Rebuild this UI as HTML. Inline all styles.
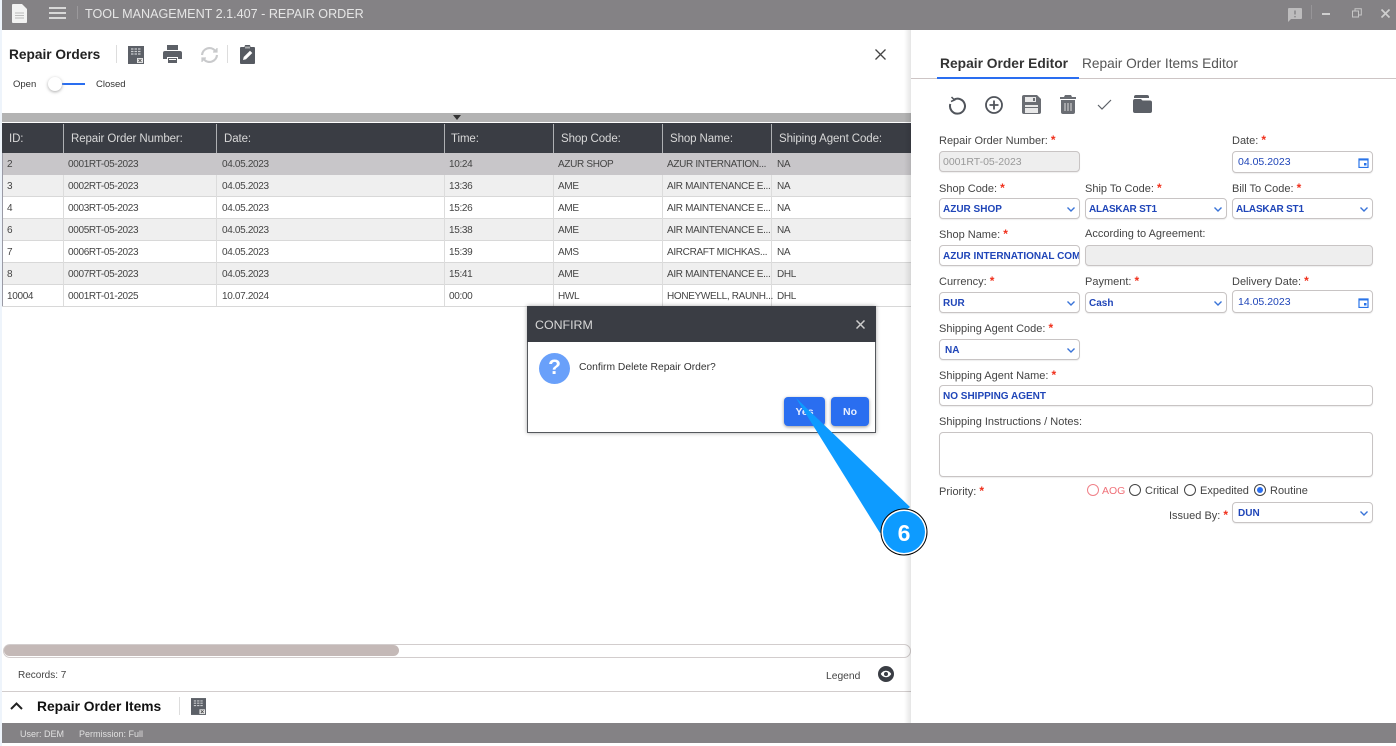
<!DOCTYPE html>
<html><head><meta charset="utf-8"><title>Tool Management - Repair Order</title>
<style>
html,body{margin:0;padding:0;width:1396px;height:746px;overflow:hidden;background:#fff;font-family:"Liberation Sans",sans-serif;color:#333}
div,span,svg{position:absolute;box-sizing:border-box}
.t{white-space:nowrap;line-height:16px}
.c{font-size:10px;letter-spacing:-.33px;color:#444;margin-top:-7px}
.h{font-size:11.5px;letter-spacing:-.1px;color:#d8d8d8;top:131px}
.r{left:2px;width:909px;height:22px;border-bottom:1px solid #d8d8d8}
.v{width:1px;background:#dcdcdc;top:153px;height:153px}
.hv{width:1px;background:#aeb0b3;top:124px;height:29px}
.l{font-size:11px;color:#444;margin-top:-8px}
.l b{color:#f0301c;font-weight:bold;font-size:12px;position:static}
.i{height:21px;border:1px solid #c8c4c4;border-radius:4px;background:#fff;font-size:10px;font-weight:bold;color:#1f45b8;line-height:20px;padding:1px 0 0 3px;white-space:nowrap;overflow:hidden;box-shadow:0 1px 1px #eee}
.d{background:#eee;color:#999;font-weight:normal;font-size:10.5px;padding-top:0}
.n{font-weight:normal;padding-left:5px}
.chev{right:3px;top:7px;width:10px;height:7px}
.cal{right:3px;top:5px;width:11px;height:11px}
</style></head><body>
<div style="left:0;top:0;width:2px;height:746px;background:#eef4fb"></div>
<!-- top bar -->
<div style="left:2px;top:0;width:1394px;height:30px;background:#848285"></div>
<svg style="left:12px;top:4px" width="16" height="19" viewBox="0 0 16 19"><path d="M1 0h9l5 5v13a1 1 0 0 1-1 1H1a1 1 0 0 1-1-1V1a1 1 0 0 1 1-1z" fill="#f2f2f2"/><path d="M3 9h9M3 11.5h9M3 14h9" stroke="#bbb" stroke-width="1"/></svg>
<svg style="left:49px;top:7px" width="17" height="12" viewBox="0 0 17 12"><path d="M0 1h17M0 6h17M0 11h17" stroke="#f4f4f4" stroke-width="1.6"/></svg>
<div style="left:77px;top:6px;width:1px;height:13px;background:#9b999c"></div>
<div class="t" style="left:85px;top:6px;font-size:12.6px;color:#e6e6e6">TOOL MANAGEMENT 2.1.407 - REPAIR ORDER</div>
<svg style="left:1288px;top:8px" width="14" height="14" viewBox="0 0 14 14"><path d="M1 0h12a1 1 0 0 1 1 1v9a1 1 0 0 1-1 1H3l-3 3V1a1 1 0 0 1 1-1z" fill="#bdbcbd"/><path d="M7 2.5v4M7 8v1.4" stroke="#848285" stroke-width="1.4"/></svg>
<div style="left:1311px;top:5px;width:1px;height:14px;background:#979598"></div>
<div style="left:1322px;top:13px;width:8px;height:2px;background:#cfcfcf"></div>
<svg style="left:1352px;top:8px" width="10" height="10" viewBox="0 0 10 10" fill="none" stroke="#c6c6c6"><rect x=".5" y="3" width="6" height="6"/><path d="M3 3V.7h6.3V7H6.5"/></svg>
<svg style="left:1381px;top:9px" width="9" height="9" viewBox="0 0 9 9"><path d="M.5.5l8 8M8.500.5l-8 8" stroke="#cfcfcf" stroke-width="1.7"/></svg>

<!-- left panel header -->
<div class="t" style="left:9px;top:47px;font-size:13.7px;font-weight:bold;color:#222">Repair Orders</div>
<div style="left:116px;top:45px;width:1px;height:18px;background:#ddd"></div>
<svg style="left:128px;top:46px" width="16" height="18" viewBox="0 0 16 18"><rect width="16" height="18" fill="#5c6067"/><path d="M3 3h10M3 5.500h10M3 8h10" stroke="#c9cbce" stroke-width="1.200" stroke-dasharray="2.500 1"/><rect x="9" y="12" width="6" height="5" fill="#e5e5e5"/><path d="M10.500 13l3 3M13.500 13l-3 3" stroke="#444" stroke-width=".8"/></svg>
<svg style="left:163px;top:45px" width="19" height="18" viewBox="0 0 19 18"><path d="M4 0h11v5H4z" fill="#5c6067"/><path d="M2 6h15a2 2 0 0 1 2 2v6h-4v-2H4v2H0V8a2 2 0 0 1 2-2z" fill="#5c6067"/><path d="M5 13h9v5H5z" fill="#5c6067"/><path d="M6 14h7v1H6z" fill="#fff"/></svg>
<svg style="left:200px;top:46px" width="19" height="18" viewBox="0 0 19 18" fill="none" stroke="#c9cacc" stroke-width="2.200"><path d="M2 9a7.500 7.500 0 0 1 13-4.500"/><path d="M17 9a7.500 7.500 0 0 1-13 4.500"/><path d="M13 6h4V2M6 12H2v4" stroke-width="1.200" fill="#c9cacc"/></svg>
<div style="left:227px;top:45px;width:1px;height:18px;background:#ddd"></div>
<svg style="left:240px;top:45px" width="15" height="19" viewBox="0 0 15 19"><path d="M1 2h3.500a3 3 0 0 1 6 0H14a1 1 0 0 1 1 1v15a1 1 0 0 1-1 1H1a1 1 0 0 1-1-1V3a1 1 0 0 1 1-1z" fill="#565a61"/><path d="M3 15l.7-3 6.300-6.300 2.300 2.300-6.300 6.300z" fill="#fff"/><rect x="5" y="1.500" width="5" height="2" fill="#fff" opacity=".5"/></svg>
<svg style="left:875px;top:49px" width="11" height="11" viewBox="0 0 11 11"><path d="M.5.5l10 10M10.500.5l-10 10" stroke="#444" stroke-width="1.300"/></svg>
<div class="t" style="left:13px;top:77px;font-size:9.5px;color:#333">Open</div>
<div style="left:55px;top:83px;width:30px;height:2px;background:#2a6ef0"></div>
<div style="left:48px;top:77px;width:14px;height:14px;border-radius:50%;background:#fff;box-shadow:0 1px 3px #aaa"></div>
<div class="t" style="left:96px;top:77px;font-size:9.5px;color:#333">Closed</div>

<!-- table -->
<div style="left:2px;top:113px;width:909px;height:9px;background:#b3b3b3"></div>
<svg style="left:453px;top:115px" width="8" height="5"><path d="M0 0h8L4 5z" fill="#333"/></svg>
<div style="left:2px;top:123px;width:909px;height:30px;background:#3a3d44"></div>
<div class="hv" style="left:63px"></div><div class="hv" style="left:216px"></div><div class="hv" style="left:444px"></div><div class="hv" style="left:553px"></div><div class="hv" style="left:662px"></div><div class="hv" style="left:771px"></div>
<div class="t h" style="left:9px">ID:</div>
<div class="t h" style="left:71px">Repair Order Number:</div>
<div class="t h" style="left:224px">Date:</div>
<div class="t h" style="left:451px">Time:</div>
<div class="t h" style="left:561px">Shop Code:</div>
<div class="t h" style="left:670px">Shop Name:</div>
<div class="t h" style="left:779px">Shiping Agent Code:</div>

<div class="r" style="top:153px;background:#c8c6c9;border-bottom:0"></div>
<div class="r" style="top:175px;background:#efefef"></div>
<div class="r" style="top:197px;background:#fff"></div>
<div class="r" style="top:219px;background:#efefef"></div>
<div class="r" style="top:241px;background:#fff"></div>
<div class="r" style="top:263px;background:#efefef"></div>
<div class="r" style="top:285px;background:#fff"></div>
<div class="v" style="left:63px;top:175px;height:131px"></div><div class="v" style="left:216px;top:175px;height:131px"></div><div class="v" style="left:444px;top:175px;height:131px"></div><div class="v" style="left:553px;top:175px;height:131px"></div><div class="v" style="left:662px;top:175px;height:131px"></div><div class="v" style="left:771px;top:175px;height:131px"></div>
<div style="left:2px;top:153px;width:1px;height:153px;background:#9a9aa5"></div>

<div class="t c" style="left:7px;top:164px">2</div><div class="t c" style="left:68px;top:164px">0001RT-05-2023</div><div class="t c" style="left:222px;top:164px">04.05.2023</div><div class="t c" style="left:449px;top:164px">10:24</div><div class="t c" style="left:558px;top:164px">AZUR SHOP</div><div class="t c" style="left:667px;top:164px">AZUR INTERNATION...</div><div class="t c" style="left:777px;top:164px">NA</div>
<div class="t c" style="left:7px;top:186px">3</div><div class="t c" style="left:68px;top:186px">0002RT-05-2023</div><div class="t c" style="left:222px;top:186px">04.05.2023</div><div class="t c" style="left:449px;top:186px">13:36</div><div class="t c" style="left:558px;top:186px">AME</div><div class="t c" style="left:667px;top:186px">AIR MAINTENANCE E...</div><div class="t c" style="left:777px;top:186px">NA</div>
<div class="t c" style="left:7px;top:208px">4</div><div class="t c" style="left:68px;top:208px">0003RT-05-2023</div><div class="t c" style="left:222px;top:208px">04.05.2023</div><div class="t c" style="left:449px;top:208px">15:26</div><div class="t c" style="left:558px;top:208px">AME</div><div class="t c" style="left:667px;top:208px">AIR MAINTENANCE E...</div><div class="t c" style="left:777px;top:208px">NA</div>
<div class="t c" style="left:7px;top:230px">6</div><div class="t c" style="left:68px;top:230px">0005RT-05-2023</div><div class="t c" style="left:222px;top:230px">04.05.2023</div><div class="t c" style="left:449px;top:230px">15:38</div><div class="t c" style="left:558px;top:230px">AME</div><div class="t c" style="left:667px;top:230px">AIR MAINTENANCE E...</div><div class="t c" style="left:777px;top:230px">NA</div>
<div class="t c" style="left:7px;top:252px">7</div><div class="t c" style="left:68px;top:252px">0006RT-05-2023</div><div class="t c" style="left:222px;top:252px">04.05.2023</div><div class="t c" style="left:449px;top:252px">15:39</div><div class="t c" style="left:558px;top:252px">AMS</div><div class="t c" style="left:667px;top:252px">AIRCRAFT MICHKAS...</div><div class="t c" style="left:777px;top:252px">NA</div>
<div class="t c" style="left:7px;top:274px">8</div><div class="t c" style="left:68px;top:274px">0007RT-05-2023</div><div class="t c" style="left:222px;top:274px">04.05.2023</div><div class="t c" style="left:449px;top:274px">15:41</div><div class="t c" style="left:558px;top:274px">AME</div><div class="t c" style="left:667px;top:274px">AIR MAINTENANCE E...</div><div class="t c" style="left:777px;top:274px">DHL</div>
<div class="t c" style="left:7px;top:296px">10004</div><div class="t c" style="left:68px;top:296px">0001RT-01-2025</div><div class="t c" style="left:222px;top:296px">10.07.2024</div><div class="t c" style="left:449px;top:296px">00:00</div><div class="t c" style="left:558px;top:296px">HWL</div><div class="t c" style="left:667px;top:296px">HONEYWELL, RAUNH...</div><div class="t c" style="left:777px;top:296px">DHL</div>

<!-- scrollbar & footer -->
<div style="left:3px;top:644px;width:908px;height:14px;border:1px solid #d2cdcd;border-radius:7px;background:#fff"></div>
<div style="left:4px;top:645px;width:395px;height:11px;border-radius:6px;background:#c4b9b7"></div>
<div class="t" style="left:18px;top:668px;font-size:10px;color:#444">Records: 7</div>
<div class="t" style="left:826px;top:669px;font-size:10.3px;color:#444">Legend</div>
<svg style="left:878px;top:666px" width="16" height="16" viewBox="0 0 16 16"><circle cx="8" cy="8" r="8" fill="#3a3d44"/><path d="M2.800 8C4 5.800 6 4.800 8 4.800S12 5.800 13.200 8C12 10.200 10 11.200 8 11.200S4 10.200 2.800 8z" fill="#fff"/><circle cx="8" cy="8" r="2" fill="#3a3d44"/></svg>
<div style="left:2px;top:691px;width:909px;height:1px;background:#d2cdcd"></div>
<svg style="left:10px;top:702px" width="13" height="8" viewBox="0 0 13 8"><path d="M1 7l5.500-5.500L12 7" fill="none" stroke="#222" stroke-width="2"/></svg>
<div class="t" style="left:37px;top:699px;font-size:13.8px;font-weight:bold;color:#111">Repair Order Items</div>
<div style="left:179px;top:697px;width:1px;height:18px;background:#ddd"></div>
<svg style="left:191px;top:698px" width="15" height="17" viewBox="0 0 16 18"><rect width="16" height="18" fill="#5c6067"/><path d="M3 3h10M3 5.500h10M3 8h10" stroke="#c9cbce" stroke-width="1.200" stroke-dasharray="2.500 1"/><rect x="9" y="12" width="6" height="5" fill="#e5e5e5"/><path d="M10.500 13l3 3M13.500 13l-3 3" stroke="#444" stroke-width=".8"/></svg>
<div style="left:2px;top:723px;width:1394px;height:20px;background:#848285"></div>
<div class="t" style="left:20px;top:726px;font-size:9px;color:#e0e0e0">User: DEM</div>
<div class="t" style="left:79px;top:726px;font-size:9px;color:#e0e0e0">Permission: Full</div>

<!-- divider shadow -->
<div style="left:904px;top:30px;width:7px;height:693px;background:linear-gradient(to right,rgba(0,0,0,0),rgba(0,0,0,.1))"></div>

<!-- editor tabs -->
<div class="t" style="left:940px;top:56px;font-size:13.8px;font-weight:bold;color:#333">Repair Order Editor</div>
<div class="t" style="left:1082px;top:56px;font-size:13.7px;color:#555">Repair Order Items Editor</div>
<div style="left:911px;top:78px;width:485px;height:1px;background:#cdc5c5"></div>
<div style="left:937px;top:77px;width:142px;height:2px;background:#2a6ef0"></div>

<svg style="left:948px;top:96px" width="18" height="19" viewBox="0 0 18 19" fill="none" stroke="#50545b" stroke-width="2"><path d="M5.500 3.800A7.500 7.500 0 1 1 2.300 8"/><path d="M3.500 1l3 3-3.500 1.500" stroke-width="1.500"/></svg>
<svg style="left:985px;top:96px" width="18" height="18" viewBox="0 0 18 18" fill="none" stroke="#50545b" stroke-width="1.800"><circle cx="9" cy="9" r="8"/><path d="M9 4.500v9M4.500 9h9"/></svg>
<svg style="left:1022px;top:95px" width="19" height="19" viewBox="0 0 19 19"><path d="M2 0h13l4 4v13a2 2 0 0 1-2 2H2a2 2 0 0 1-2-2V2a2 2 0 0 1 2-2z" fill="#6a6d73"/><rect x="3" y="2" width="11" height="5" fill="#e8e8e8"/><rect x="11" y="3" width="2" height="3" fill="#6a6d73"/><rect x="3" y="10" width="13" height="8" fill="#e8e8e8"/><rect x="3" y="12" width="13" height="1" fill="#6a6d73"/></svg>
<svg style="left:1060px;top:95px" width="16" height="19" viewBox="0 0 16 19"><path d="M5 0h6l1 2h4v2H0V2h4z" fill="#6a6d73"/><path d="M1 5h14v12a2 2 0 0 1-2 2H3a2 2 0 0 1-2-2z" fill="#6a6d73"/><path d="M5 8v8M8 8v8M11 8v8" stroke="#ddd" stroke-width="1"/></svg>
<svg style="left:1097px;top:99px" width="15" height="11" viewBox="0 0 15 11"><path d="M1 6l4 4 9-9" fill="none" stroke="#5c6067" stroke-width="1.200"/></svg>
<svg style="left:1133px;top:95px" width="19" height="18" viewBox="0 0 19 18"><path d="M1 2a2 2 0 0 1 2-2h11a2 2 0 0 1 2 2v1H1z" fill="#5c6067"/><path d="M0 6a2 2 0 0 1 2-2h6l1.500 1.500H17a2 2 0 0 1 2 2V16a2 2 0 0 1-2 2H2a2 2 0 0 1-2-2z" fill="#5c6067"/></svg>

<!-- form -->
<div class="t l" style="left:939px;top:140px">Repair Order Number: <b>*</b></div>
<div class="i d" style="left:939px;top:151px;width:141px">0001RT-05-2023</div>
<div class="t l" style="left:1232px;top:140px">Date: <b>*</b></div>
<div class="i n" style="left:1232px;top:151px;width:141px;height:22px;line-height:20px;font-weight:normal;font-size:10.5px;padding-top:0">04.05.2023<svg class="cal" viewBox="0 0 11 11" style="top:5px"><path d="M1 2h9v8.500H1z" fill="none" stroke="#2a74e8" stroke-width="1.200"/><path d="M1 1.500h9v2H1zM6 6h2.500v2.500H6z" fill="#2a74e8"/></svg></div>

<div class="t l" style="left:939px;top:188px">Shop Code: <b>*</b></div>
<div class="i" style="left:939px;top:198px;width:141px">AZUR SHOP<svg class="chev" viewBox="0 0 10 7"><path d="M1.500 1.500L5 5l3.500-3.500" fill="none" stroke="#3a74d8" stroke-width="1.400"/></svg></div>
<div class="t l" style="left:1085px;top:188px">Ship To Code: <b>*</b></div>
<div class="i" style="left:1085px;top:198px;width:142px;letter-spacing:-.2px">ALASKAR ST1<svg class="chev" viewBox="0 0 10 7"><path d="M1.500 1.500L5 5l3.500-3.500" fill="none" stroke="#3a74d8" stroke-width="1.400"/></svg></div>
<div class="t l" style="left:1232px;top:188px">Bill To Code: <b>*</b></div>
<div class="i" style="left:1232px;top:198px;width:141px;letter-spacing:-.2px">ALASKAR ST1<svg class="chev" viewBox="0 0 10 7"><path d="M1.500 1.500L5 5l3.500-3.500" fill="none" stroke="#3a74d8" stroke-width="1.400"/></svg></div>

<div class="t l" style="left:939px;top:234px">Shop Name: <b>*</b></div>
<div class="i" style="left:939px;top:245px;width:141px">AZUR INTERNATIONAL COMPANY</div>
<div class="t l" style="left:1085px;top:234px">According to Agreement:</div>
<div class="i d" style="left:1085px;top:245px;width:288px"></div>

<div class="t l" style="left:939px;top:281px">Currency: <b>*</b></div>
<div class="i" style="left:939px;top:292px;width:141px">RUR<svg class="chev" viewBox="0 0 10 7"><path d="M1.500 1.500L5 5l3.500-3.500" fill="none" stroke="#3a74d8" stroke-width="1.400"/></svg></div>
<div class="t l" style="left:1085px;top:281px">Payment: <b>*</b></div>
<div class="i" style="left:1085px;top:292px;width:142px">Cash<svg class="chev" viewBox="0 0 10 7"><path d="M1.500 1.500L5 5l3.500-3.500" fill="none" stroke="#3a74d8" stroke-width="1.400"/></svg></div>
<div class="t l" style="left:1232px;top:281px">Delivery Date: <b>*</b></div>
<div class="i n" style="left:1232px;top:290px;width:141px;height:23px;line-height:21px;font-weight:normal;font-size:10.5px">14.05.2023<svg class="cal" viewBox="0 0 11 11" style="top:6px"><path d="M1 2h9v8.500H1z" fill="none" stroke="#2a74e8" stroke-width="1.200"/><path d="M1 1.500h9v2H1zM6 6h2.500v2.500H6z" fill="#2a74e8"/></svg></div>

<div class="t l" style="left:939px;top:328px">Shipping Agent Code: <b>*</b></div>
<div class="i n" style="left:939px;top:339px;width:141px;font-weight:bold">NA<svg class="chev" viewBox="0 0 10 7"><path d="M1.500 1.500L5 5l3.500-3.500" fill="none" stroke="#3a74d8" stroke-width="1.400"/></svg></div>
<div class="t l" style="left:939px;top:375px">Shipping Agent Name: <b>*</b></div>
<div class="i" style="left:939px;top:385px;width:434px">NO SHIPPING AGENT</div>
<div class="t l" style="left:939px;top:421.5px">Shipping Instructions / Notes:</div>
<div class="i" style="left:939px;top:432px;width:434px;height:45px"></div>

<div class="t l" style="left:939px;top:491px">Priority: <b>*</b></div>
<div style="left:1087px;top:484px;width:12px;height:12px;border:1.500px solid #f08088;border-radius:50%"></div>
<div class="t" style="left:1102px;top:483px;font-size:10.5px;color:#f07078">AOG</div>
<div style="left:1129px;top:484px;width:12px;height:12px;border:1.500px solid #444;border-radius:50%"></div>
<div class="t" style="left:1145px;top:483px;font-size:11px;color:#444">Critical</div>
<div style="left:1184px;top:484px;width:12px;height:12px;border:1.500px solid #444;border-radius:50%"></div>
<div class="t" style="left:1200px;top:483px;font-size:11px;color:#444">Expedited</div>
<div style="left:1254px;top:484px;width:12px;height:12px;border:1.500px solid #444;border-radius:50%"></div>
<div style="left:1257px;top:487px;width:6px;height:6px;background:#2a6ef0;border-radius:50%"></div>
<div class="t" style="left:1270px;top:483px;font-size:11px;color:#444">Routine</div>
<div class="t l" style="left:1169px;top:515px">Issued By: <b>*</b></div>
<div class="i n" style="left:1232px;top:502px;width:141px;font-weight:bold">DUN<svg class="chev" viewBox="0 0 10 7"><path d="M1.500 1.500L5 5l3.500-3.500" fill="none" stroke="#3a74d8" stroke-width="1.400"/></svg></div>

<!-- dialog -->
<div style="left:527px;top:306px;width:349px;height:127px;background:#fff;border:1px solid #55585d;border-top:0;box-shadow:0 0 4px rgba(0,0,0,.35)"></div>
<div style="left:527px;top:306px;width:349px;height:36px;background:#3a3d44"></div>
<div class="t" style="left:535px;top:317px;font-size:12.4px;color:#d8d8d8">CONFIRM</div>
<svg style="left:856px;top:320px" width="9" height="9" viewBox="0 0 9 9"><path d="M.5.5l8 8M8.500.5l-8 8" stroke="#ccc" stroke-width="1.500"/></svg>
<div style="left:539px;top:353px;width:31px;height:31px;border-radius:50%;background:#69a0fa"></div>
<div class="t" style="left:539px;top:360px;width:31px;text-align:center;font-size:21px;font-weight:bold;color:#fff">?</div>
<div class="t" style="left:579px;top:360px;font-size:10.3px;color:#333">Confirm Delete Repair Order?</div>
<div style="left:784px;top:397px;width:41px;height:29px;background:#2a6ef0;border-radius:4px;box-shadow:0 1px 3px rgba(0,0,0,.4)"></div>
<div class="t" style="left:784px;top:404px;width:41px;text-align:center;font-size:10.500px;font-weight:bold;color:#e8f0ff">Yes</div>
<div style="left:831px;top:397px;width:38px;height:29px;background:#2a6ef0;border-radius:4px;box-shadow:0 1px 3px rgba(0,0,0,.4)"></div>
<div class="t" style="left:831px;top:404px;width:38px;text-align:center;font-size:10.500px;font-weight:bold;color:#e8f0ff">No</div>

<!-- callout -->
<svg style="left:780px;top:385px" width="160" height="180" viewBox="780 385 160 180"><path d="M796 398L910 507 880 533z" fill="#0d9bff"/><circle cx="904" cy="532" r="23.500" fill="#000"/><circle cx="904" cy="532" r="22.500" fill="#fff"/><circle cx="904" cy="532" r="21" fill="#0d9bff"/><text x="904" y="541" text-anchor="middle" font-family="Liberation Sans" font-weight="bold" font-size="23" fill="#fff">6</text></svg>
</body></html>
